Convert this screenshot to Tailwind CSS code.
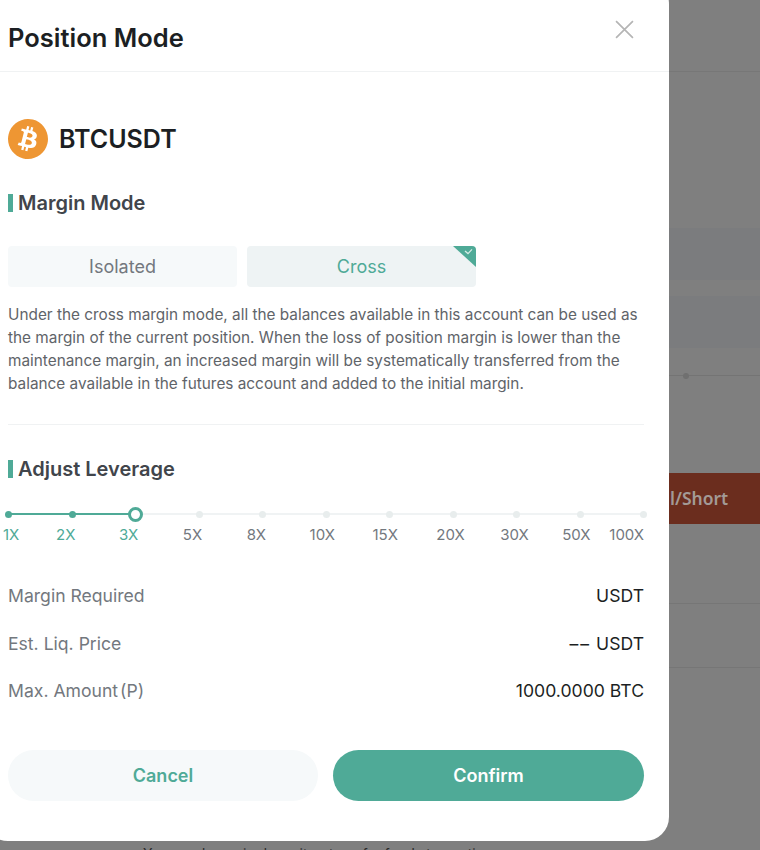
<!DOCTYPE html>
<html>
<head>
<meta charset="utf-8">
<script src="https://cdn.jsdelivr.net/npm/@tailwindcss/browser@4"></script>
</head>
<body class="m-0">
<div class="relative w-[760px] h-[850px] overflow-hidden bg-[#7f7f7f] font-['Inter',sans-serif]">
  <!-- page behind the dialog -->
  <div class="flex flex-col h-full">
    <div class="h-[72px] border-b border-[#777777]"></div>
    <div class="h-[156px]"></div>
    <div class="h-[52px] bg-[#7b7c7e]"></div>
    <div class="h-[16px]"></div>
    <div class="h-[52px] bg-[#7b7c7e]"></div>
    <div class="h-[28px] border-b border-[#747474] relative">
      <div class="absolute left-[683px] top-[25px] w-[6px] h-[6px] rounded-full bg-[#707070]"></div>
    </div>
    <div class="h-[97px]"></div>
    <div class="h-[51px] bg-[#6b2d1e] flex items-center pl-[670px] text-[17.5px] font-semibold font-['Noto_Sans',sans-serif] text-[#a39a96] whitespace-nowrap">l/Short</div>
    <div class="h-[80px] border-b border-[#767676]"></div>
    <div class="h-[64px] border-b border-[#767676]"></div>
    <div class="h-[178px] pl-[143px] pt-[176px] text-[14px] text-[#2a2a2a] whitespace-nowrap leading-5">You need margin deposit or transfer funds to continue</div>
  </div>

  <!-- dialog -->
  <div class="absolute left-[-16px] top-[-20px] w-[685px] h-[861px] bg-white rounded-[24px] flex flex-col pl-[24px] pr-[25px] overflow-hidden">
    <div class="-ml-[24px] -mr-[25px] pl-[24px] pr-[25px] h-[92px] pt-[20px] shrink-0 border-b border-[#f0f2f3] flex items-center justify-between">
      <div class="text-[25.5px] leading-8 font-semibold text-[#1c1f23] mt-[4px]">Position Mode</div>
      <svg class="mt-[-12px] mr-[10px]" width="19" height="19" viewBox="0 0 18 18" fill="none" stroke="#b5b5b5" stroke-width="1.6"><path d="M1 1l16 16M17 1L1 17"/></svg>
    </div>

    <div class="flex items-center gap-[11px] mt-[47px] h-[40px]">
      <svg width="40" height="40" viewBox="0 0 24 24"><circle cx="12" cy="12" r="12" fill="#fff"/><path fill="#ee9633" d="M23.638 14.904c-1.602 6.43-8.113 10.34-14.542 8.736C2.67 22.05-1.244 15.525.362 9.105 1.962 2.67 8.475-1.243 14.9.358c6.43 1.605 10.342 8.115 8.738 14.548v-.002zm-6.35-4.613c.24-1.59-.974-2.45-2.64-3.03l.54-2.153-1.315-.33-.525 2.107c-.345-.087-.705-.167-1.064-.25l.526-2.127-1.32-.33-.54 2.165c-.285-.067-.565-.132-.84-.2l-1.815-.45-.35 1.407s.975.225.955.236c.535.136.63.486.615.766l-1.477 5.92c-.075.166-.24.406-.614.314.015.02-.96-.24-.96-.24l-.66 1.51 1.71.426.93.242-.54 2.19 1.32.327.54-2.17c.36.1.705.19 1.05.273l-.51 2.154 1.32.33.545-2.19c2.24.427 3.93.257 4.64-1.774.57-1.637-.03-2.58-1.217-3.196.854-.193 1.5-.76 1.68-1.93h.01zm-3.01 4.22c-.404 1.64-3.157.75-4.05.53l.72-2.9c.896.23 3.757.67 3.33 2.37zm.41-4.24c-.37 1.49-2.662.735-3.405.55l.654-2.64c.744.18 3.137.524 2.75 2.084v.006z"/></svg>
      <div class="text-[25px] font-semibold text-[#1c1f23] leading-8">BTCUSDT</div>
    </div>

    <div class="flex items-center gap-[5px] mt-[32px] h-[24px]">
      <div class="w-[5px] h-[18px] bg-[#4faa97]"></div>
      <div class="text-[20px] font-semibold text-[#41454b] leading-6">Margin Mode</div>
    </div>

    <div class="flex gap-[10px] mt-[31px]">
      <div class="w-[229px] h-[41px] rounded-[4px] bg-[#f6f9fa] flex items-center justify-center text-[18px] text-[#73787e]">Isolated</div>
      <div class="relative w-[229px] h-[41px] rounded-[4px] bg-[#eef3f4] flex items-center justify-center text-[18px] text-[#4faa97] overflow-hidden">
        Cross
        <svg class="absolute right-0 top-0" width="23" height="21" viewBox="0 0 23 21"><path d="M0 0H23V21Z" fill="#4faa97"/><path d="M12 5l3 2.6 4-4.2" fill="none" stroke="#d5ebe5" stroke-width="1.3"/></svg>
      </div>
    </div>

    <p class="mt-[16px] w-[636px] text-[15.35px] leading-[23px] text-[#5f6469]">Under the cross margin mode, all the balances available in this account can be used as the margin of the current position. When the loss of position margin is lower than the maintenance margin, an increased margin will be systematically transferred from the balance available in the futures account and added to the initial margin.</p>

    <div class="mt-[29px] h-px w-[636px] bg-[#f0f2f3]"></div>

    <div class="flex items-center gap-[5px] mt-[32px] h-[24px]">
      <div class="w-[5px] h-[18px] bg-[#4faa97]"></div>
      <div class="text-[20px] font-semibold text-[#41454b] leading-6">Adjust Leverage</div>
    </div>

    <div class="relative mt-[26px] w-[640px] -ml-[4px] h-[14px]">
      <div class="absolute left-[4px] right-0 top-[6px] h-[2px] bg-[#f0f3f4]"></div>
      <div class="absolute left-[4px] w-[128px] top-[6px] h-[2px] bg-[#4faa97]"></div>
      <div class="absolute left-0 right-[-3px] top-0 h-[14px] flex justify-between items-center pl-[1px]">
        <span class="w-[7px] h-[7px] rounded-full bg-[#4faa97]"></span>
        <span class="w-[7px] h-[7px] rounded-full bg-[#4faa97]"></span>
        <span class="w-[15px] h-[15px] shrink-0 rounded-full bg-white border-[3px] border-[#4faa97] -mx-[4px]"></span>
        <span class="w-[7px] h-[7px] rounded-full bg-[#e8eded]"></span>
        <span class="w-[7px] h-[7px] rounded-full bg-[#e8eded]"></span>
        <span class="w-[7px] h-[7px] rounded-full bg-[#e8eded]"></span>
        <span class="w-[7px] h-[7px] rounded-full bg-[#e8eded]"></span>
        <span class="w-[7px] h-[7px] rounded-full bg-[#e8eded]"></span>
        <span class="w-[7px] h-[7px] rounded-full bg-[#e8eded]"></span>
        <span class="w-[7px] h-[7px] rounded-full bg-[#e8eded]"></span>
        <span class="w-[7px] h-[7px] rounded-full bg-[#e8eded]"></span>
      </div>
    </div>

    <div class="flex mt-[4px] -ml-[5px] h-[20px] text-[15px] leading-5 text-[#73787e] whitespace-nowrap">
      <span class="w-[54px] text-[#4faa97]">1X</span>
      <span class="w-[64px] text-[#4faa97]">2X</span>
      <span class="w-[65px] text-[#4faa97]">3X</span>
      <span class="w-[65px]">5X</span>
      <span class="w-[64px]">8X</span>
      <span class="w-[64px]">10X</span>
      <span class="w-[65px]">15X</span>
      <span class="w-[65px]">20X</span>
      <span class="w-[63px]">30X</span>
      <span class="w-[48px]">50X</span>
      <span>100X</span>
    </div>

    <div class="flex flex-col mt-[39px] w-[636px] gap-[23.5px] text-[17.6px] leading-6">
      <div class="flex justify-between"><span class="text-[#73787e]">Margin Required</span><span class="text-[#1c1f23]">USDT</span></div>
      <div class="flex justify-between"><span class="text-[#73787e]">Est. Liq. Price</span><span class="text-[#1c1f23]"><span class="tracking-[2px]">––</span> USDT</span></div>
      <div class="flex justify-between"><span class="text-[#73787e]">Max. Amount<span class="ml-[2px]">(P)</span></span><span class="text-[#1c1f23]">1000.0000 BTC</span></div>
    </div>

    <div class="flex gap-[15px] mt-[47px] w-[636px]">
      <div class="w-[310px] h-[51px] rounded-full bg-[#f6f9fa] flex items-center justify-center text-[18px] font-semibold text-[#4faa97]">Cancel</div>
      <div class="w-[311px] h-[51px] rounded-full bg-[#4faa97] flex items-center justify-center text-[18px] font-semibold text-white">Confirm</div>
    </div>
  </div>
</div>
</body>
</html>
